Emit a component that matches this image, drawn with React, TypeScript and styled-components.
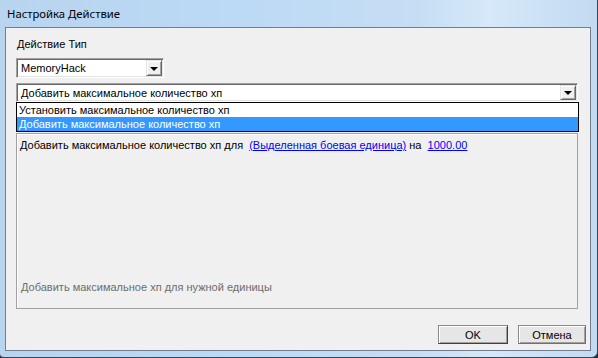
import React from 'react'
import styled, { createGlobalStyle } from 'styled-components'

// Style
const GlobalStyle = createGlobalStyle`
  html, body {
    margin: 0;
    padding: 0;
    background: #2a2a2a;
  }
  * {
    box-sizing: border-box;
  }
`

const Frame = styled.div`
  width: 598px;
  height: 358px;
  display: flex;
  flex-direction: column;
  padding: 0 6px 6px 5px;
  background: linear-gradient(
    to right,
    #b8d4ef 0%,
    #bcd9f5 40%,
    #c6def4 70%,
    #d6e8f9 82%,
    #c2daf1 100%
  );
  border-right: 1px solid #3c4650;
  border-bottom: 1px solid #3c4650;
  border-bottom-right-radius: 6px;
  border-bottom-left-radius: 4px;
`

const TitleBar = styled.div`
  height: 27px;
  display: flex;
  align-items: center;
  padding-left: 2px;
  padding-bottom: 1px;
  font-family: 'Noto Sans', 'Open Sans', sans-serif;
  font-size: 11.3px;
  color: #000;
`

const Client = styled.div`
  flex: 1;
  display: flex;
  flex-direction: column;
  background: #f0f0f0;
  border: 1px solid #6f7f8f;
  padding: 0 11px 6px 10px;
  font-family: 'Liberation Sans', Arial, sans-serif;
  font-size: 11px;
  color: #000;
`

const Label = styled.div`
  margin-top: 10px;
  height: 13px;
  line-height: 13px;
  padding-left: 1px;
`

const Combo = styled.div<{ $width?: number; $top: number; $height: number }>`
  position: relative;
  width: ${(p) => (p.$width ? `${p.$width}px` : '100%')};
  height: ${(p) => p.$height}px;
  margin-top: ${(p) => p.$top}px;
  display: flex;
  align-items: center;
  background: #fff;
  border-top: 1px solid #a0a0a0;
  border-left: 1px solid #a0a0a0;
  border-bottom: 1px solid #fff;
  border-right: 1px solid #fff;
  box-shadow: inset 1px 1px 0 #696969, inset -1px -1px 0 #e3e3e3;
  padding: 0 20px 0 4px;
  white-space: nowrap;
`

const ArrowButton = styled.div`
  position: absolute;
  top: 1px;
  right: 1px;
  bottom: 1px;
  width: 16px;
  display: flex;
  align-items: center;
  justify-content: center;
  background: #f0f0f0;
  border-top: 1px solid #e3e3e3;
  border-left: 1px solid #e3e3e3;
  border-bottom: 1px solid #696969;
  border-right: 1px solid #696969;
  box-shadow: inset 1px 1px 0 #fff, inset -1px -1px 0 #a0a0a0;
`

const Triangle = styled.span`
  width: 0;
  height: 0;
  border-left: 4px solid transparent;
  border-right: 4px solid transparent;
  border-top: 4px solid #000;
  margin-top: 1px;
`

const DropList = styled.div`
  width: 563px;
  border: 1px solid #000;
  background: #fff;
  display: flex;
  flex-direction: column;
`

const ListItem = styled.div<{ $selected?: boolean }>`
  height: 14px;
  line-height: 14px;
  padding-left: 2px;
  background: ${(p) => (p.$selected ? '#3399ff' : '#fff')};
  color: ${(p) => (p.$selected ? '#fff' : '#000')};
  white-space: nowrap;
`

const Panel = styled.div`
  height: 176px;
  width: 562px;
  display: flex;
  flex-direction: column;
  justify-content: space-between;
  border: 1px solid #a0a0a0;
  box-shadow: inset 1px 1px 0 #fff;
  padding: 5px 3px 14px 3px;
  margin-top: 1px;
`

const Sentence = styled.div`
  line-height: 13px;
  white-space: pre;
`

const Link = styled.a`
  color: #0000ff;
  text-decoration: underline;
  cursor: pointer;
`

const Hint = styled.div`
  line-height: 13px;
  color: #6d6d6d;
  padding-left: 1px;
`

const ButtonRow = styled.div`
  margin-top: auto;
  display: flex;
  justify-content: flex-end;
  gap: 10px;
  margin-right: -7px;
`

const Button = styled.button<{ $default?: boolean; $width: number }>`
  width: ${(p) => p.$width}px;
  height: 19px;
  padding: 0;
  font-family: 'Liberation Sans', Arial, sans-serif;
  font-size: 11px;
  color: #000;
  background: #e6e6e6;
  border: 1px solid ${(p) => (p.$default ? '#404040' : '#707070')};
  border-top-color: #8a8a8a;
  border-left-color: #8a8a8a;
  box-shadow: inset 1px 1px 0 #fff, inset -1px -1px 0 #a0a0a0;
`

// Component
const App = () => {
  return (
    <>
      <GlobalStyle />
      <Frame>
        <TitleBar>Настройка Действие</TitleBar>
        <Client>
          <Label>Действие Тип</Label>
          <Combo $width={148} $top={7} $height={20}>
            MemoryHack
            <ArrowButton>
              <Triangle />
            </ArrowButton>
          </Combo>
          <Combo $width={562} $top={5} $height={19}>
            Добавить максимальное количество хп
            <ArrowButton>
              <Triangle />
            </ArrowButton>
          </Combo>
          <DropList>
            <ListItem>Установить максимальное количество хп</ListItem>
            <ListItem $selected>Добавить максимальное количество хп</ListItem>
          </DropList>
          <Panel>
            <Sentence>
              Добавить максимальное количество хп для  <Link>(Выделенная боевая единица)</Link> на  <Link>1000.00</Link>
            </Sentence>
            <Hint>Добавить максимальное хп для нужной единицы</Hint>
          </Panel>
          <ButtonRow>
            <Button $default $width={70}>
              OK
            </Button>
            <Button $width={68}>Отмена</Button>
          </ButtonRow>
        </Client>
      </Frame>
    </>
  )
}

export default App
